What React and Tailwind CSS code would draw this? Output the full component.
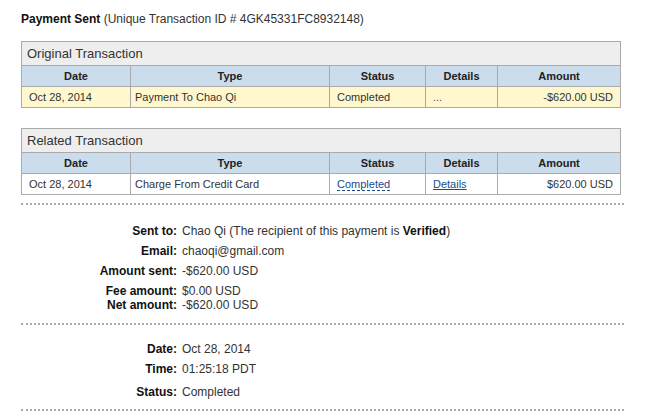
import React from 'react';

const cols = 'grid grid-cols-[109px_199px_96px_72px_122px]';

function TxTable({ title, row, highlight }) {
  const cell = 'border-r border-[#aaa] h-[20px] leading-[20px] truncate';
  return (
    <div className="w-[600px] border border-[#aaa] text-[11px] text-[#333]">
      <div className="h-[24px] leading-[23px] bg-[#eeeeee] border-b border-[#aaa] px-[5px] text-[13px] text-[#333]">
        {title}
      </div>
      <div className={`${cols} bg-[#cbdcec] border-b border-[#aaa] font-bold text-[#222] text-center`}>
        <div className={cell}>Date</div>
        <div className={cell}>Type</div>
        <div className={cell}>Status</div>
        <div className={cell}>Details</div>
        <div className="h-[20px] leading-[20px]">Amount</div>
      </div>
      <div className={`${cols} ${highlight ? 'bg-[#fff8cf]' : 'bg-white'}`}>
        <div className={`${cell} px-[7px]`}>{row.date}</div>
        <div className={`${cell} pl-[4px]`}>{row.type}</div>
        <div className={`${cell} px-[7px]`}>{row.status}</div>
        <div className={`${cell} px-[7px]`}>{row.details}</div>
        <div className="h-[20px] leading-[20px] px-[7px] text-right">{row.amount}</div>
      </div>
    </div>
  );
}

function Dots() {
  return <div className="w-[603px] border-t-2 border-dotted border-[#aaa]" />;
}

function Field({ label, children, lh = 'leading-[20px]' }) {
  return (
    <div className={`flex ${lh}`}>
      <div className="w-[156px] text-right font-bold text-[#111] shrink-0">{label}</div>
      <div className="pl-[5px] text-[#333]">{children}</div>
    </div>
  );
}

export default function App() {
  return (
    <div className="w-[647px] h-[414px] bg-white pl-[21px] pt-[12px] text-[12px] overflow-hidden" style={{ fontFamily: '"Liberation Sans", Arial, sans-serif' }}>
      <div className="leading-[14px] text-[#333]">
        <span className="font-bold text-[#111]">Payment Sent</span> (Unique Transaction ID # 4GK45331FC8932148)
      </div>

      <div className="mt-[15px]">
        <TxTable
          title="Original Transaction"
          highlight
          row={{
            date: 'Oct 28, 2014',
            type: 'Payment To Chao Qi',
            status: 'Completed',
            details: <span className="text-[#8b1f6b]">...</span>,
            amount: '-$620.00 USD',
          }}
        />
      </div>

      <div className="mt-[20px]">
        <TxTable
          title="Related Transaction"
          row={{
            date: 'Oct 28, 2014',
            type: 'Charge From Credit Card',
            status: (
              <span className="text-[#1a4c8a] border-b border-dashed border-[#1a4c8a]">Completed</span>
            ),
            details: <span className="text-[#1a4c8a] underline">Details</span>,
            amount: '$620.00 USD',
          }}
        />
      </div>

      <div className="mt-[8px]">
        <Dots />
      </div>

      <div className="mt-[16px]">
        <Field label="Sent to:">
          Chao Qi (The recipient of this payment is <span className="font-bold text-[#111]">Verified</span>)
        </Field>
        <Field label="Email:">chaoqi@gmail.com</Field>
        <Field label="Amount sent:">-$620.00 USD</Field>
        <div className="mt-[3px]">
          <Field label="Fee amount:" lh="leading-[14px]">$0.00 USD</Field>
          <Field label="Net amount:" lh="leading-[14px]">-$620.00 USD</Field>
        </div>
      </div>

      <div className="mt-[11px]">
        <Dots />
      </div>

      <div className="mt-[14px]">
        <Field label="Date:">Oct 28, 2014</Field>
        <Field label="Time:">01:25:18 PDT</Field>
        <div className="mt-[3px]">
          <Field label="Status:">Completed</Field>
        </div>
      </div>

      <div className="mt-[7px]">
        <Dots />
      </div>
    </div>
  );
}
